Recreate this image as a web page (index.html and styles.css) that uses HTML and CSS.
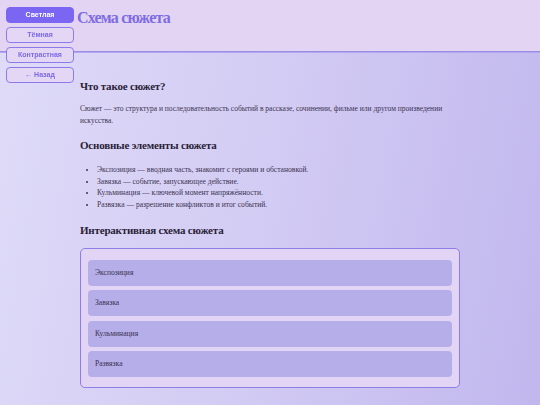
FILE: index.html
```html
<!DOCTYPE html>
<html lang="ru">
<head>
<meta charset="utf-8">
<link rel="stylesheet" href="styles.css">
</head>
<body>
<div class="themes">
  <button class="tbtn active">Светлая</button>
  <button class="tbtn">Тёмная</button>
  <button class="tbtn">Контрастная</button>
  <button class="tbtn">← Назад</button>
</div>
<header class="top">
  <h1 class="title">Схема сюжета</h1>
</header>
<main class="main">
  <h2 class="h first">Что такое сюжет?</h2>
  <p class="text">Сюжет — это структура и последовательность событий в рассказе, сочинении, фильме или другом произведении искусства.</p>
  <h2 class="h">Основные элементы сюжета</h2>
  <ul class="list">
    <li>Экспозиция — вводная часть, знакомит с героями и обстановкой.</li>
    <li>Завязка — событие, запускающее действие.</li>
    <li>Кульминация — ключевой момент напряжённости.</li>
    <li>Развязка — разрешение конфликтов и итог событий.</li>
  </ul>
  <h2 class="h">Интерактивная схема сюжета</h2>
  <div class="scheme">
    <div class="step">Экспозиция</div>
    <div class="step">Завязка</div>
    <div class="step">Кульминация</div>
    <div class="step">Развязка</div>
  </div>
</main>
</body>
</html>
```

FILE: styles.css
```css
html, body {
  margin: 0;
  padding: 0;
}
body {
  min-height: 405px;
  font-family: "Liberation Serif", "DejaVu Serif", serif;
  background: linear-gradient(100deg, #dfdbf8 0%, #d2cbf3 50%, #c1b7ee 100%);
  color: #2b2340;
}
.top {
  height: 52px;
  background: #e2d4f2;
  border-bottom: 1px solid #9a8de8;
  box-sizing: border-box;
  padding-left: 77px;
  box-shadow: 0 1px 0 #b3a8ee;
}
.title {
  margin: 0;
  padding-top: 8px;
  font-size: 16px;
  line-height: 20px;
  letter-spacing: -0.8px;
  font-weight: bold;
  color: #7d6ce4;
}
.themes {
  position: fixed;
  left: 6px;
  top: 7px;
  display: flex;
  flex-direction: column;
  gap: 4px;
  z-index: 2;
}
.tbtn {
  width: 68px;
  height: 16px;
  box-sizing: border-box;
  border: 1px solid #8c7ae8;
  border-radius: 4px;
  background: #e4d6f5;
  color: #7b69e6;
  font-family: "Liberation Sans", Arial, sans-serif;
  font-weight: bold;
  font-size: 7px;
  padding: 0;
  line-height: 14px;
  text-align: center;
}
.tbtn.active {
  background: #7a66f3;
  border-color: #7a66f3;
  color: #ffffff;
}
.main {
  width: 380px;
  margin: 0 auto;
  padding-top: 27px;
  padding-bottom: 18px;
}
.h {
  margin: 0;
  font-size: 11px;
  line-height: 15px;
  letter-spacing: -0.2px;
  font-weight: bold;
  color: #2a2238;
}
.text {
  margin: 9px 0 12px;
  font-size: 7.5px;
  line-height: 11.5px;
  color: #3d3452;
}
.list {
  margin: 11px 0 12px;
  padding-left: 17px;
  font-size: 7.6px;
  line-height: 11.7px;
  color: #3d3452;
}
.scheme {
  margin-top: 10px;
  border: 1px solid #8e7ce8;
  border-radius: 5px;
  background: #e2d4f4;
  padding: 11px 7px 10px;
  display: flex;
  flex-direction: column;
  gap: 4.5px;
}
.step {
  height: 26px;
  border-radius: 4px;
  background: #b5aee9;
  font-size: 7.6px;
  line-height: 26px;
  padding-left: 7px;
  color: #3a3150;
}
```
